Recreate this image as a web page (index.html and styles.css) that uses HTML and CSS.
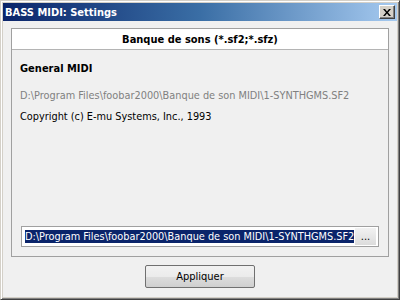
FILE: index.html
```html
<!DOCTYPE html>
<html lang="fr">
<head>
  <meta charset="UTF-8">
  <title>BASS MIDI: Settings</title>
  <link rel="stylesheet" href="styles.css">
</head>
<body>
  <div class="window">
    <div class="titlebar">
      <span class="title">BASS MIDI: Settings</span>
      <button class="close" type="button">
        <svg width="8" height="7" viewBox="0 0 8 7">
          <path d="M0 0h2l2 2.5L6 0h2L5 3.5 8 7H6L4 4.5 2 7H0l3-3.5z" fill="#000"/>
        </svg>
      </button>
    </div>
    <div class="client">
      <div class="group">
        <div class="groupHead">Banque de sons (*.sf2;*.sfz)</div>
        <div class="groupBody">
          <div class="sfName">General MIDI</div>
          <div class="sfPath">D:\Program Files\foobar2000\Banque de son MIDI\1-SYNTHGMS.SF2</div>
          <div class="sfCopy">Copyright (c) E-mu Systems, Inc., 1993</div>
          <div class="field">
            <span class="fieldText"><span class="selected">D:\Program Files\foobar2000\Banque de son MIDI\1-SYNTHGMS.SF2</span></span>
            <button class="browse" type="button">...</button>
          </div>
        </div>
      </div>
      <div class="actions">
        <button class="apply" type="button">Appliquer</button>
      </div>
    </div>
  </div>
</body>
</html>
```

FILE: styles.css
```css
/* base */
body {
  margin: 0;
  padding: 0;
  font-family: "DejaVu Sans Condensed", "DejaVu Sans", sans-serif;
  font-stretch: condensed;
  font-size: 10.85px;
  color: #000;
}
button {
  font-family: inherit;
  font-stretch: condensed;
  font-size: 11px;
  padding: 0;
  margin: 0;
}

/* fenêtre */
.window {
  width: 400px;
  height: 300px;
  box-sizing: border-box;
  display: flex;
  flex-direction: column;
  background: #d4d0c8;
  border-style: solid;
  border-width: 1px;
  border-color: #d4d0c8 #404040 #404040 #d4d0c8;
  box-shadow: inset 1px 1px 0 #fff, inset -1px -1px 0 #808080;
  padding: 2px;
}
.titlebar {
  height: 18px;
  flex: none;
  display: flex;
  align-items: center;
  justify-content: space-between;
  padding: 0 2px 0 2px;
  background: linear-gradient(90deg, #0a246a 0%, #3a6ea5 50%, #a6caf0 100%);
  color: #fff;
}
.title {
  font-weight: bold;
  font-size: 11px;
  padding-top: 1px;
}
.close {
  width: 16px;
  height: 14px;
  display: flex;
  align-items: center;
  justify-content: center;
  background: #d4d0c8;
  border-style: solid;
  border-width: 1px;
  border-color: #fff #404040 #404040 #fff;
  box-shadow: inset -1px -1px 0 #808080;
}

/* zone cliente */
.client {
  flex: 1;
  display: flex;
  flex-direction: column;
  background: #f0f0f0;
  padding: 7px 8px 0 8px;
}
.group {
  height: 229px;
  box-sizing: border-box;
  display: flex;
  flex-direction: column;
  border: 1px solid #a0a0a0;
}
.groupHead {
  height: 20px;
  line-height: 21px;
  flex: none;
  text-align: center;
  font-weight: bold;
  font-size: 11px;
  background: #fff;
  border-bottom: 1px solid #b4b4b4;
}
.groupBody {
  flex: 1;
  display: flex;
  flex-direction: column;
  padding: 12px 9px 9px 8px;
}
.sfName {
  font-weight: bold;
  font-size: 11px;
  line-height: 14px;
}
.sfPath {
  margin-top: 13px;
  line-height: 13px;
  color: #808080;
}
.sfCopy {
  margin-top: 8px;
  line-height: 13px;
}
.field {
  margin-top: auto;
  margin-left: 1px;
  height: 21px;
  box-sizing: border-box;
  display: flex;
  align-items: center;
  border: 1px solid #a0a0a0;
  background: #fff;
  padding: 0 2px 0 3px;
}
.fieldText {
  flex: 1;
  overflow: hidden;
  white-space: nowrap;
}
.selected {
  background: #0a246a;
  color: #fff;
  padding: 1px 0;
}
.browse {
  width: 21px;
  height: 17px;
  border: none;
  background: linear-gradient(#f2f2f2, #dcdcdc);
}

/* bouton */
.actions {
  display: flex;
  justify-content: center;
  padding-top: 8px;
}
.apply {
  width: 110px;
  height: 23px;
  border: 1px solid #707070;
  border-radius: 2px;
  background: linear-gradient(#f2f2f2 0%, #ebebeb 50%, #dddddd 51%, #cfcfcf 100%);
}
```
